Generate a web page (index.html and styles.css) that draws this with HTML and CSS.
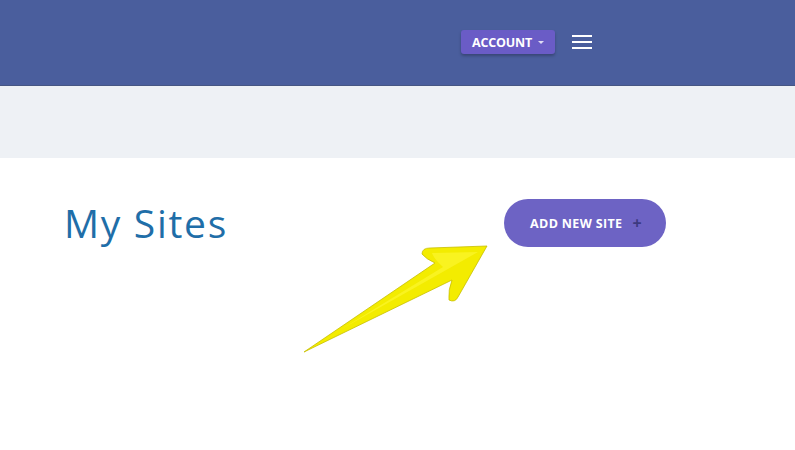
FILE: index.html
```html
<!DOCTYPE html>
<html>
<head>
<meta charset="utf-8">
<link rel="stylesheet" href="styles.css">
</head>
<body>
<header class="topbar">
  <div class="nav">
    <button class="account">ACCOUNT <span class="caret"></span></button>
    <span class="burger"><i></i><i></i><i></i></span>
  </div>
</header>
<div class="band"></div>
<main class="content">
  <div class="row">
    <h1 class="title">My Sites</h1>
    <button class="add">ADD NEW SITE <span class="plus">+</span></button>
  </div>
</main>
<svg class="arrow" width="200" height="120" viewBox="300 240 200 120">
  <path d="M304 352 L435 263 Q426 259 422 254 Q422 248 430 248 L487 246 L458 297 Q455 303 449 300 Q448 290 452 280 Z" fill="#f3ec00" stroke="#c8bf00" stroke-width="0.8" stroke-linejoin="round"/>
  <path d="M340 330 L443 267 Q434 259 432 253 L478 252 Z" fill="#fffa40" opacity="0.5"/>
</svg>
</body>
</html>
```
FILE: styles.css
```css
* { box-sizing: border-box; }
body { margin: 0; background: #fff; font-family: "Open Sans", "DejaVu Sans", sans-serif; position: relative; min-height: 450px; }
.topbar { height: 86px; background: #4a5e9d; border-bottom: 1px solid #465683; display: flex; align-items: center; }
.nav { display: flex; align-items: center; justify-content: flex-end; gap: 17px; width: 100%; padding-right: 203px; margin-top: -1px; }
.account { background: #6a5cc6; color: #fff; border: none; border-radius: 3px; height: 24px; width: 94px; padding: 1px 0 0; font-family: "Open Sans", sans-serif; font-weight: 700; font-size: 12.5px; letter-spacing: -0.2px; display: flex; align-items: center; justify-content: center; gap: 6px; box-shadow: 0 2px 3px rgba(0,0,0,0.25); }
.caret { width: 0; height: 0; border-left: 3px solid transparent; border-right: 3px solid transparent; border-top: 3px solid #e0dcf4; }
.burger { display: flex; flex-direction: column; gap: 4px; width: 20px; }
.burger i { display: block; height: 2px; background: #fff; }
.band { height: 72px; background: #eef1f5; }
.content { padding: 41px 0 0 64px; }
.row { display: flex; align-items: center; justify-content: space-between; width: 602px; }
.title { margin: 0; font-family: "Open Sans", sans-serif; font-weight: 400; font-size: 39px; color: #1f6ea8; letter-spacing: 1.7px; line-height: 48px; }
.add { background: #6d63c4; color: #fff; border: none; border-radius: 24px; height: 48px; width: 162px; font-family: "Open Sans", sans-serif; font-weight: 700; font-size: 12.5px; letter-spacing: 0.35px; display: flex; align-items: center; justify-content: center; gap: 10px; padding: 0 0 0 2px; }
.plus { color: #3c3a80; font-size: 16px; font-weight: 700; line-height: 1; }
.arrow { position: absolute; left: 300px; top: 240px; pointer-events: none; }
```
